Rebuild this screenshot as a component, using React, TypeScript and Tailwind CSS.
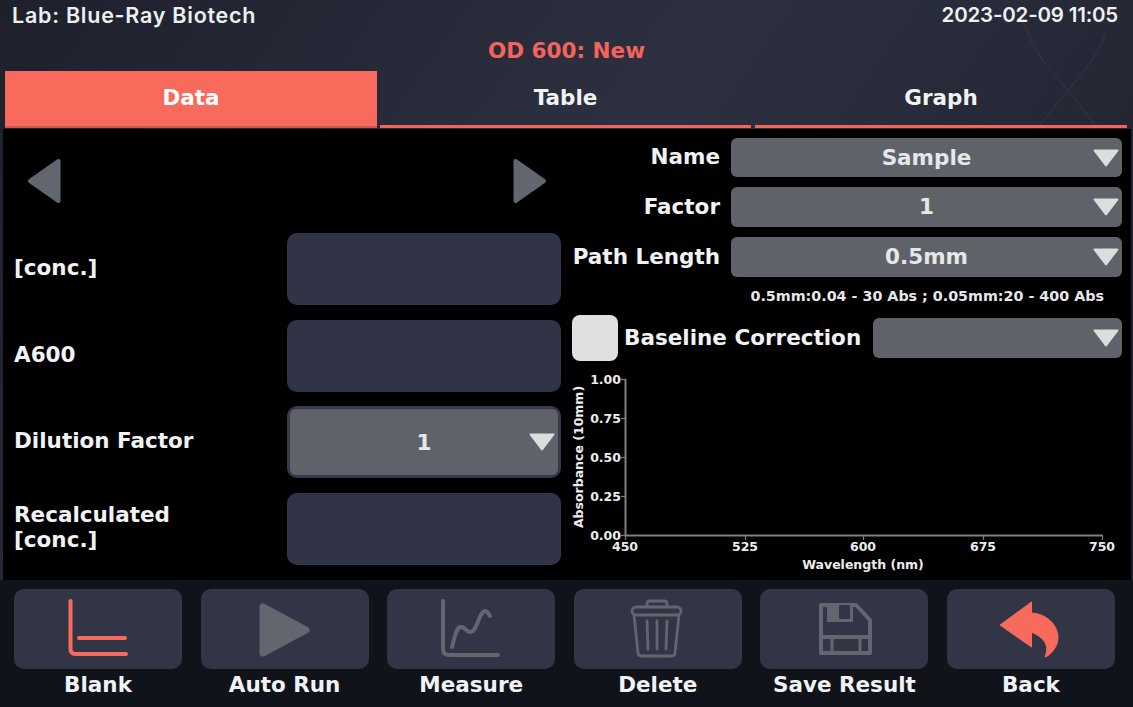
const dejavu = "font-['DejaVu_Sans'] font-bold";

function Caret({ className }: { className: string }) {
  return (
    <svg viewBox="0 0 26 18" className={className}>
      <path d="M1.5 1.5H24.5L13 16.5Z" fill="#dcdddc" stroke="#dcdddc" strokeWidth="2" strokeLinejoin="round" />
    </svg>
  );
}

function Select({ value, height, width }: { value: string; height: string; width: string }) {
  return (
    <div className={`relative flex items-center justify-center rounded-md bg-[#5f6369] pt-[1px] text-[21.5px] text-[#e6e7e8] ${height} ${width}`}>
      {value}
      <Caret className="absolute right-[3px] top-1/2 h-[18px] w-[26px] -translate-y-1/2" />
    </div>
  );
}

function Arrow({ dir }: { dir: "left" | "right" }) {
  return (
    <svg viewBox="0 0 34 46" className="h-[46px] w-[34px]">
      <path
        d={dir === "left" ? "M31.500 3V43L3 23Z" : "M2.500 3V43L31 23Z"}
        fill="#62666e"
        stroke="#62666e"
        strokeWidth="4"
        strokeLinejoin="round"
      />
    </svg>
  );
}

function LeftRow({ label, children }: { label: React.ReactNode; children: React.ReactNode }) {
  return (
    <div className="flex h-[72px] items-center">
      <div className="w-[284px] pb-[3px] pl-[11px] text-[21.5px] leading-[25px] text-[#f1f2f3]">{label}</div>
      {children}
    </div>
  );
}

function RightRow({ label, value, height }: { label: string; value: string; height: string }) {
  return (
    <div className="flex items-center">
      <div className="w-[148px] whitespace-nowrap text-right text-[21.5px] text-[#f1f2f3]">{label}</div>
      <Select value={value} height={height} width="ml-[11px] w-[391px]" />
    </div>
  );
}

function Chart() {
  const xs = [
    [625, "450"],
    [745, "525"],
    [863, "600"],
    [983, "675"],
    [1102, "750"],
  ] as const;
  const ys = [
    [379, "1.00"],
    [418, "0.75"],
    [457, "0.50"],
    [496, "0.25"],
    [535, "0.00"],
  ] as const;
  return (
    <svg viewBox="565 370 565 208" className="mt-[9px] h-[208px] w-[565px] font-['DejaVu_Sans'] font-bold" fill="#eceded">
      <path d="M625.5 379V535.5H1102.500" fill="none" stroke="#808080" strokeWidth="2" />
      {xs.map(([x, t]) => (
        <g key={t}>
          <path d={`M${x + 0.5} 535V540`} stroke="#808080" strokeWidth="1.2" />
          <text x={x} y="551" textAnchor="middle" fontSize="12.5">{t}</text>
        </g>
      ))}
      {ys.map(([y, t]) => (
        <g key={t}>
          <path d={`M621 ${y + 0.5}H626`} stroke="#808080" strokeWidth="1.2" />
          <text x="621" y={y + 4.5} textAnchor="end" fontSize="12.5">{t}</text>
        </g>
      ))}
      <text x="863" y="569" textAnchor="middle" fontSize="12.5">Wavelength (nm)</text>
      <text transform="translate(583 457) rotate(-90)" textAnchor="middle" fontSize="12.5">Absorbance (10mm)</text>
    </svg>
  );
}

const coral = "#f76a5c";
const gray = "#62666e";

const icons: Record<string, React.ReactNode> = {
  Blank: (
    <g fill="none" stroke={coral} strokeWidth="4" strokeLinecap="round">
      <path d="M56.500 12V60Q56.500 65 61.500 65H112" />
      <path d="M65 49H111" />
    </g>
  ),
  "Auto Run": (
    <path d="M62 18V64L105 41Z" fill={gray} stroke={gray} strokeWidth="7" strokeLinejoin="round" />
  ),
  Measure: (
    <g fill="none" stroke={gray} strokeWidth="4" strokeLinecap="round">
      <path d="M56 12V60Q56 66 62 66H111" />
      <path d="M65 58C68 48 69 38 74 38C79 38 79 44 84 43C90 42 92 23 98 22C100 22 102 25 103 27" />
    </g>
  ),
  Delete: (
    <g fill="none" stroke={gray} strokeWidth="2.8" strokeLinecap="round" strokeLinejoin="round">
      <rect x="58" y="18" width="49" height="8" rx="4" />
      <path d="M73 18V15Q73 12 76 12H90Q93 12 93 15V18" />
      <path d="M60 26L64 64Q64 67 68 67H97Q101 67 101 64L105 26" />
      <path d="M73 32L74 60M83 32V60M93 32L92 60" />
    </g>
  ),
  "Save Result": (
    <g>
      <path d="M61 16H96L110 31V64H61Z" fill="none" stroke={gray} strokeWidth="4" strokeLinejoin="round" />
      <path d="M67 16H93V33H67Z" fill={gray} />
      <rect x="79" y="16" width="11" height="14" fill="#323546" rx="1" />
      <path d="M72 64V49H100V64" fill="none" stroke={gray} strokeWidth="3" />
      <path d="M61 46H110V50H61Z" fill={gray} />
      <path d="M74 50H98V62H74Z" fill="#323546" />
    </g>
  ),
  Back: (
    <path
      d="M53 36L84.500 13V24C100 25 111 36 111 49C111 57 104 66 98 68C101 60 102 51 84.500 43V58Z"
      fill={coral}
      stroke={coral}
      strokeWidth="1"
      strokeLinejoin="round"
    />
  ),
};

function ToolButton({ label }: { label: string }) {
  return (
    <div className="flex w-[168px] flex-col items-center">
      <div className="h-[80px] w-[168px] rounded-[10px] bg-[#323546]">
        <svg viewBox="0 0 168 80" className="h-[80px] w-[168px]">{icons[label]}</svg>
      </div>
      <div className="mt-[2px] text-[21.5px] leading-[28px] text-[#f1f2f3]">{label}</div>
    </div>
  );
}

export default function App() {
  return (
    <div className={`relative h-[707px] w-[1133px] overflow-hidden bg-[linear-gradient(125deg,#1e202c_0%,#2d3040_45%,#1c1e29_100%)] ${dejavu}`}>
      <svg viewBox="0 0 1133 707" className="pointer-events-none absolute inset-0 h-[707px] w-[1133px]" fill="none" stroke="#343646" strokeWidth="1">
        <path d="M1020 10C1030 50 1050 70 1068 90L1095 125" />
        <path d="M1105 35C1095 60 1085 70 1068 90L1040 125" />
      </svg>
      <div className="relative flex h-[30px] items-center justify-between pl-[12px] pr-[15px] font-['Inter'] font-semibold text-[#eeeff0]">
        <span className="text-[21.5px] tracking-[0.75px]">Lab: Blue-Ray Biotech</span>
        <span className="text-[20.5px] tracking-[-0.2px]">2023-02-09 11:05</span>
      </div>
      <div className="relative flex h-[41px] items-center justify-center pt-[1px] text-[21.5px] text-[#f4645a]">OD 600: New</div>
      <div className="relative flex h-[57px] gap-[3px] pl-[5px] pr-[6px] text-[21.5px] text-[#f1f2f3]">
        <div className="flex w-[372px] items-center justify-center border-b-[2px] border-[#c95a52] bg-[#f76a5c] text-white">Data</div>
        <div className="flex w-[371px] items-center justify-center border-b-[3px] border-[#f4645a]">Table</div>
        <div className="ml-[1px] flex w-[372px] items-center justify-center border-b-[3px] border-[#f4645a]">Graph</div>
      </div>
      <div className="relative ml-[3px] mt-[1px] flex h-[451px] w-[1128px] bg-black">
        <div className="flex w-[559px] flex-col">
          <div className="flex h-[104px] items-center justify-between pl-[24px] pr-[15px]">
            <Arrow dir="left" />
            <Arrow dir="right" />
          </div>
          <div className="flex flex-col gap-[14.6px]">
            <LeftRow label="[conc.]">
              <div className="h-[72px] w-[274px] rounded-[10px] bg-[#313446]" />
            </LeftRow>
            <LeftRow label="A600">
              <div className="h-[72px] w-[274px] rounded-[10px] bg-[#313446]" />
            </LeftRow>
            <LeftRow label="Dilution Factor">
              <div className="rounded-[10px] border-[3px] border-[#373a4e] bg-[#373a4e]">
                <Select value="1" height="h-[66px]" width="w-[268px]" />
              </div>
            </LeftRow>
            <LeftRow label={<>Recalculated<br />[conc.]</>}>
              <div className="h-[72px] w-[274px] rounded-[10px] bg-[#313446]" />
            </LeftRow>
          </div>
        </div>
        <div className="flex w-[569px] flex-col pl-[10px] pt-[9px]">
          <div className="flex flex-col gap-[10px]">
            <RightRow label="Name" value="Sample" height="h-[39px]" />
            <RightRow label="Factor" value="1" height="h-[40px]" />
            <RightRow label="Path Length" value="0.5mm" height="h-[40px]" />
          </div>
          <div className="mt-[9px] pr-[27px] text-right text-[14.3px] leading-[20px] text-[#e6e7e8]">
            0.5mm:0.04 - 30 Abs ; 0.05mm:20 - 400 Abs
          </div>
          <div className="mt-[9px] flex items-center">
            <div className="h-[46px] w-[46px] rounded-[8px] bg-[#dfe0e0]" />
            <div className="ml-[6px] w-[249px] pt-[1px] text-[21.5px] text-[#f1f2f3]">Baseline Correction</div>
            <Select value="" height="h-[40px]" width="w-[249px]" />
          </div>
          <div className="-ml-[7px]">
            <Chart />
          </div>
        </div>
      </div>
      <div className="relative flex h-[127px] items-start justify-between bg-[#11131b] pl-[14px] pr-[18px] pt-[9px]">
        {Object.keys(icons).map((label) => (
          <ToolButton key={label} label={label} />
        ))}
      </div>
    </div>
  );
}
